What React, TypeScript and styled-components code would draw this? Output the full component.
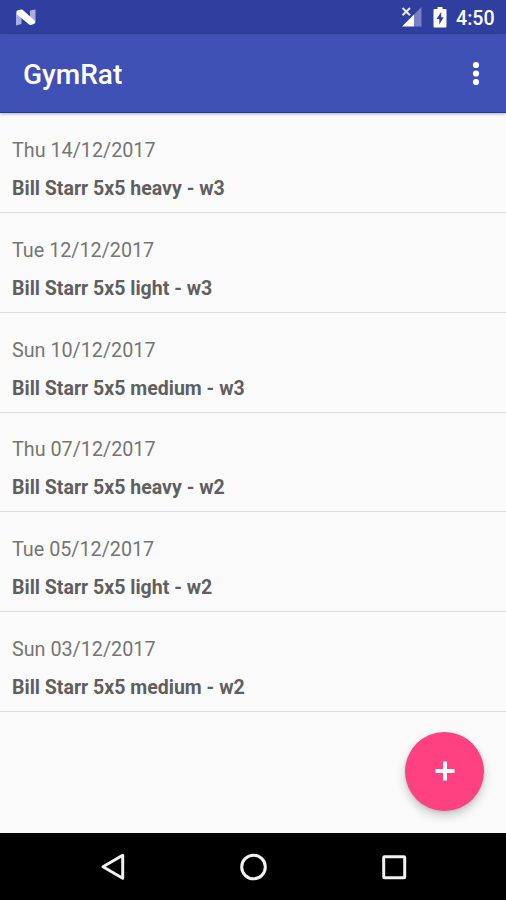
import React from "react";
import styled, { createGlobalStyle } from "styled-components";

const GlobalStyle = createGlobalStyle`
  * { box-sizing: border-box; }
  html, body { margin: 0; padding: 0; background: #fafafa; }
  body { font-family: Roboto, "Liberation Sans", sans-serif; overflow: hidden; }
`;

const Screen = styled.div`
  position: relative;
  display: flex;
  flex-direction: column;
  width: 506px;
  height: 900px;
  background: #fafafa;
  overflow: hidden;
`;

const StatusBar = styled.header`
  flex: none;
  display: flex;
  align-items: center;
  height: 34px;
  padding: 0 11px 0 15px;
  background: #303f9f;
  color: #fff;
`;

const StatusIcons = styled.div`
  display: flex;
  align-items: center;
  margin-left: auto;
`;

const Clock = styled.span`
  width: 39px;
  margin-left: 9px;
  font-size: 19.6px;
  font-weight: 500;
  line-height: 34px;
  padding-top: 3px;
  white-space: nowrap;
`;

const BatterySlot = styled.div`
  display: flex;
  margin-left: 11px;
`;

const Toolbar = styled.div`
  flex: none;
  display: flex;
  align-items: center;
  justify-content: space-between;
  height: 79px;
  padding: 3px 23px 0 23px;
  background: #3f51b5;
  border-bottom: 1px solid #1f3a9e;
  box-shadow: 0 1px 3px rgba(0, 0, 0, 0.3);
  color: #fff;
  z-index: 1;
`;

const Title = styled.h1`
  margin: 0;
  padding-top: 1px;
  font-size: 28px;
  font-weight: 500;
  line-height: 36px;
`;

const MenuButton = styled.button`
  display: flex;
  padding: 0 0 2px;
  border: 0;
  background: none;
  color: inherit;
`;

const WorkoutList = styled.ul`
  flex: 1;
  margin: 0;
  padding: 0;
  list-style: none;
`;

const WorkoutRow = styled.li`
  height: 99.85px;
  padding: 25.85px 12px 0;
  border-bottom: 1px solid #dcdcdc;
  color: #5f5f5f;
`;

const WorkoutDate = styled.div`
  font-size: 19.75px;
  line-height: 24px;
  color: #757575;
`;

const WorkoutName = styled.div`
  margin-top: 14px;
  font-size: 19.55px;
  font-weight: 700;
  line-height: 24px;
`;

const AddButton = styled.button`
  position: absolute;
  right: 22px;
  bottom: 89.5px;
  display: flex;
  align-items: center;
  justify-content: center;
  width: 79px;
  height: 79px;
  padding: 0;
  border: 0;
  border-radius: 50%;
  background: #ff4081;
  box-shadow: 0 5px 10px rgba(0, 0, 0, 0.2), 0 1px 3px rgba(0, 0, 0, 0.1);
`;

const NavBar = styled.nav`
  flex: none;
  display: flex;
  align-items: center;
  justify-content: space-between;
  height: 67px;
  padding: 0 98px;
  background: #000;
`;

const NavButton = styled.button`
  display: flex;
  padding: 0;
  border: 0;
  background: none;
`;

const workouts = [
  { date: "Thu 14/12/2017", name: "Bill Starr 5x5 heavy - w3" },
  { date: "Tue 12/12/2017", name: "Bill Starr 5x5 light - w3" },
  { date: "Sun 10/12/2017", name: "Bill Starr 5x5 medium - w3" },
  { date: "Thu 07/12/2017", name: "Bill Starr 5x5 heavy - w2" },
  { date: "Tue 05/12/2017", name: "Bill Starr 5x5 light - w2" },
  { date: "Sun 03/12/2017", name: "Bill Starr 5x5 medium - w2" },
];

const NougatIcon = () => (
  <svg width="22" height="17" viewBox="0 0 22 17">
    <path d="M1 3.5L6.5 6V15L1 16.5Z" fill="#a9b0dc" />
    <path d="M15 1.5L20.5 .5V14L15 11.5Z" fill="#a9b0dc" />
    <path
      d="M3.5 3.2L6.5 2.6L18 13L15.5 14L4 4.5Z"
      fill="#fff"
      stroke="#fff"
      strokeWidth="4.2"
      strokeLinejoin="round"
    />
  </svg>
);

const SignalIcon = () => (
  <svg width="21" height="20" viewBox="0 0 21 20">
    <path d="M20.5 0V19.5H13V7.5Z" fill="#7782c4" />
    <path d="M13 7.5V19.5H1Z" fill="#fff" />
    <path d="M1.5 1L9 8.2M9 1L1.5 8.2" stroke="#e6e8f8" strokeWidth="2" fill="none" />
  </svg>
);

const BatteryIcon = () => (
  <svg width="14" height="21" viewBox="0 0 14 21">
    <path
      d="M4.5 0H9.5V2H12.5Q13.5 2 13.5 3V19.5Q13.5 20.5 12.5 20.5H1.5Q.5 20.5 .5 19.5V3Q.5 2 1.5 2H4.5Z"
      fill="#fff"
    />
    <path d="M8.2 5L3.5 12H6.3V17.5L10.7 10.3H8.2Z" fill="#303f9f" />
  </svg>
);

export default function App() {
  return (
    <Screen>
      <GlobalStyle />
      <StatusBar>
        <NougatIcon />
        <StatusIcons>
          <SignalIcon />
          <BatterySlot>
            <BatteryIcon />
          </BatterySlot>
          <Clock>4:50</Clock>
        </StatusIcons>
      </StatusBar>
      <Toolbar>
        <Title>GymRat</Title>
        <MenuButton aria-label="More options">
          <svg width="14" height="26" viewBox="0 0 14 26" fill="#fff">
            <circle cx="7" cy="4" r="3.1" />
            <circle cx="7" cy="12.5" r="3.1" />
            <circle cx="7" cy="21" r="3.1" />
          </svg>
        </MenuButton>
      </Toolbar>
      <WorkoutList>
        {workouts.map((w) => (
          <WorkoutRow key={w.date}>
            <WorkoutDate>{w.date}</WorkoutDate>
            <WorkoutName>{w.name}</WorkoutName>
          </WorkoutRow>
        ))}
      </WorkoutList>
      <AddButton aria-label="Add workout">
        <svg width="20" height="20" viewBox="0 0 20 20">
          <path d="M10 .5V19.5M.5 10H19.5" stroke="#fff" strokeWidth="4" />
        </svg>
      </AddButton>
      <NavBar>
        <NavButton aria-label="Back">
          <svg width="30" height="30" viewBox="0 0 30 30">
            <path d="M5 14.7L24.7 3.2V26.2Z" fill="none" stroke="#f2f2f2" strokeWidth="3" strokeLinejoin="round" />
          </svg>
        </NavButton>
        <NavButton aria-label="Home">
          <svg width="30" height="30" viewBox="0 0 30 30">
            <circle cx="15.5" cy="15" r="11.8" fill="none" stroke="#f2f2f2" strokeWidth="3" />
          </svg>
        </NavButton>
        <NavButton aria-label="Recent apps">
          <svg width="30" height="30" viewBox="0 0 30 30">
            <rect x="5.7" y="4.7" width="21" height="21" rx=".8" fill="none" stroke="#f2f2f2" strokeWidth="3" />
          </svg>
        </NavButton>
      </NavBar>
    </Screen>
  );
}
